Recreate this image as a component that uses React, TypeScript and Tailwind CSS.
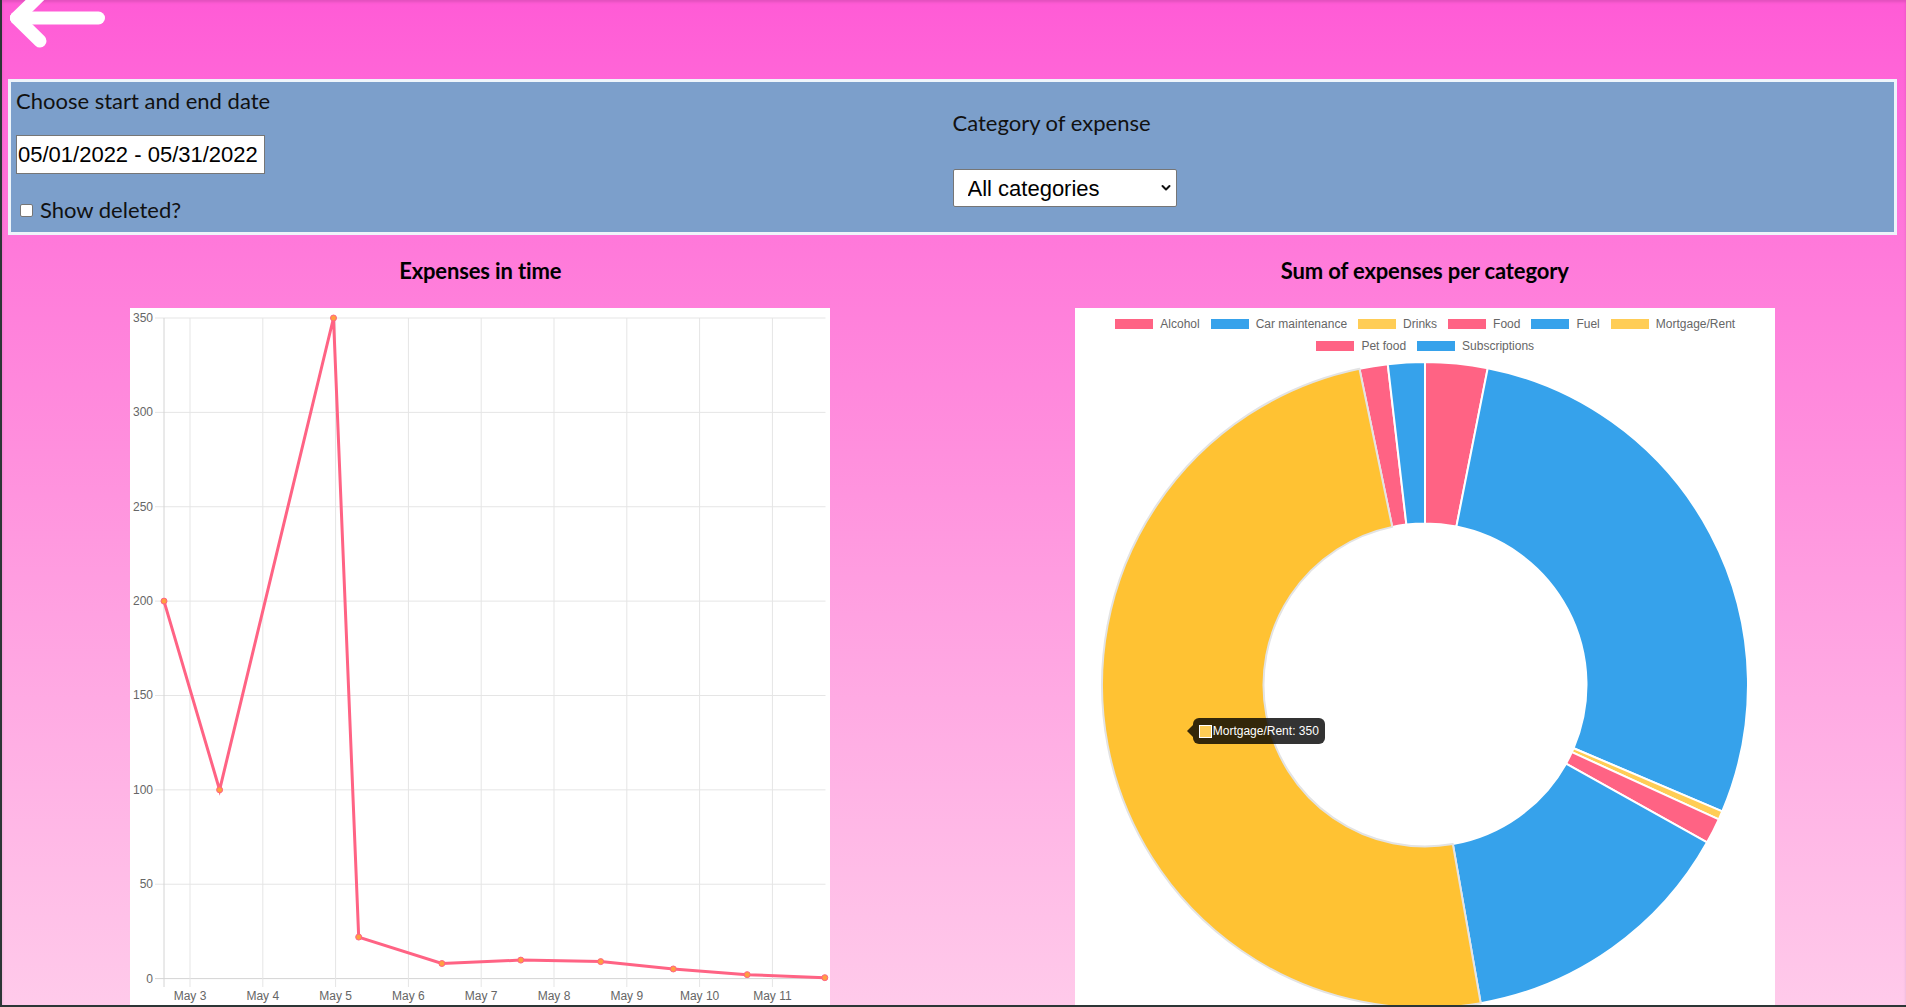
import { useState } from 'react';

const RED = '#ff6384';
const BLUE = '#36a2eb';
const YELLOW = '#ffcd56';

const categories = [
  { name: 'Alcohol', value: 22, color: RED },
  { name: 'Car maintenance', value: 200, color: BLUE },
  { name: 'Drinks', value: 3, color: YELLOW },
  { name: 'Food', value: 9, color: RED },
  { name: 'Fuel', value: 100, color: BLUE },
  { name: 'Mortgage/Rent', value: 350, color: YELLOW },
  { name: 'Pet food', value: 10, color: RED },
  { name: 'Subscriptions', value: 13, color: BLUE },
];

// line chart geometry (local to the 700x700 canvas)
const Y_TOP = 10;
const Y_ZERO = 670.6;
const X_AXIS = 34;
const X_RIGHT = 695.5;
const yOf = (v: number) => Y_ZERO - (v / 350) * (Y_ZERO - Y_TOP);

const yTicks = [350, 300, 250, 200, 150, 100, 50, 0];
const xTicks = ['May 3', 'May 4', 'May 5', 'May 6', 'May 7', 'May 8', 'May 9', 'May 10', 'May 11'].map((label, i) => ({
  label,
  x: 60 + i * 72.8,
}));

const points: [number, number][] = [
  [34, 200],
  [89.6, 100],
  [203.5, 350],
  [228.7, 22],
  [311.9, 8],
  [390.8, 9.8],
  [470.7, 9],
  [543.3, 5.1],
  [617.2, 2.1],
  [694.8, 0.5],
];

const LineChart = () => {
  const line = points.map(([x, v], i) => `${i === 0 ? 'M' : 'L'}${x} ${yOf(v)}`).join(' ');
  return (
    <svg width={700} height={700} viewBox="0 0 700 700" className="block">
      {yTicks.map((t) => (
        <g key={t}>
          <line x1={25} x2={X_RIGHT} y1={yOf(t)} y2={yOf(t)} stroke={t === 0 ? '#d4d4d4' : '#e5e5e5'} strokeWidth={1} />
          <text x={23} y={yOf(t) + 4} textAnchor="end" fontSize={12} fill="#666" fontFamily="Liberation Sans, Arial, sans-serif">
            {t}
          </text>
        </g>
      ))}
      <line x1={X_AXIS} x2={X_AXIS} y1={Y_TOP} y2={679} stroke="#d4d4d4" strokeWidth={1} />
      {xTicks.map((t) => (
        <g key={t.label}>
          <line x1={t.x} x2={t.x} y1={Y_TOP} y2={679} stroke="#e5e5e5" strokeWidth={1} />
          <text x={t.x} y={692} textAnchor="middle" fontSize={12} fill="#666" fontFamily="Liberation Sans, Arial, sans-serif">
            {t.label}
          </text>
        </g>
      ))}
      <path d={line} fill="none" stroke={RED} strokeWidth={3} strokeLinejoin="miter" />
      {points.map(([x, v], i) => (
        <circle key={i} cx={x} cy={yOf(v)} r={3} fill="#ff9f40" stroke={RED} strokeWidth={1} />
      ))}
    </svg>
  );
};

const arc = (cx: number, cy: number, r0: number, r1: number, a0: number, a1: number) => {
  const rad = (a: number) => (a * Math.PI) / 180;
  const p = (r: number, a: number) => `${cx + r * Math.sin(rad(a))} ${cy - r * Math.cos(rad(a))}`;
  const large = a1 - a0 > 180 ? 1 : 0;
  return `M${p(r1, a0)} A${r1} ${r1} 0 ${large} 1 ${p(r1, a1)} L${p(r0, a1)} A${r0} ${r0} 0 ${large} 0 ${p(r0, a0)} Z`;
};

const Doughnut = () => {
  const [hovered] = useState('Mortgage/Rent');
  const total = categories.reduce((s, c) => s + c.value, 0);
  let acc = 0;
  const slices = categories.map((c) => {
    const a0 = (acc / total) * 360;
    acc += c.value;
    const a1 = (acc / total) * 360;
    return { ...c, a0, a1 };
  });
  const ordered = [...slices.filter((s) => s.name !== hovered), ...slices.filter((s) => s.name === hovered)];

  return (
    <div className="relative w-[700px] h-[700px] bg-white flex flex-col">
      <div className="flex flex-wrap justify-center gap-[10px] px-[10px] pt-[10px] pb-[10px] font-['Liberation_Sans',Arial,sans-serif] text-[12px] leading-[12px] text-[#666]">
        {categories.map((c) => (
          <div key={c.name} className="flex items-center gap-[6px] h-[12px]">
            <span className="w-[40px] h-[12px] border border-white" style={{ backgroundColor: c.color }} />
            <span>{c.name}</span>
          </div>
        ))}
      </div>
      <svg width={700} height={646} viewBox="0 0 700 646" className="block">
        {ordered.map((s) => (
          <path
            key={s.name}
            d={arc(350, 323, 161.5, 323, s.a0, s.a1)}
            fill={s.name === hovered ? '#ffc233' : s.color}
            stroke={s.name === hovered ? '#e3e3e3' : '#ffffff'}
            strokeWidth={2}
            strokeLinejoin="round"
          />
        ))}
      </svg>
      <div className="absolute left-[118px] top-[410px] flex items-center gap-[1px] rounded-[6px] bg-black/80 px-[6px] py-[6px] font-['Liberation_Sans',Arial,sans-serif] text-[12px] leading-[14px] text-white">
        <span className="absolute left-[-6px] top-1/2 -translate-y-1/2 w-0 h-0 border-y-[6px] border-y-transparent border-r-[6px] border-r-black/80" />
        <span className="w-[13px] h-[13px] border border-white bg-[#ffcd56]" />
        <span>Mortgage/Rent: 350</span>
      </div>
    </div>
  );
};

const BackArrow = () => (
  <svg width={112} height={52} viewBox="0 0 112 52" className="block" fill="none" stroke="#ffffff" strokeWidth={13} strokeLinecap="round" strokeLinejoin="round">
    <path d="M14.5 18 H96.5" />
    <path d="M14.5 18 L38 41" />
    <path d="M14.5 18 L38 -5" />
  </svg>
);

export default function App() {
  return (
    <div className="h-[1007px] w-full overflow-hidden border-l-2 border-b-2 border-[#2c3636] bg-gradient-to-b from-[#ff5bd6] via-[#ff8fdd] via-45% to-[#ffcaea] shadow-[inset_0_2px_3px_rgba(0,0,0,0.12)] font-['Lato',sans-serif] text-[#111]">
      <header className="h-[79px] flex items-start">
        <BackArrow />
      </header>

      <section className="ml-[6px] mr-[9px] h-[156px] border-[3px] border-[#eef5fb] bg-[#7c9fcb] grid grid-cols-2">
        <div className="flex flex-col items-start pl-[5px] pt-[7px]">
          <label className="text-[22px] leading-[24px]">Choose start and end date</label>
          <input
            type="text"
            readOnly
            value="05/01/2022 - 05/31/2022"
            className="mt-[22px] h-[39px] w-[249px] border border-[#767676] bg-white px-[1px] font-['Liberation_Sans',Arial,sans-serif] text-[22px] text-black outline-none"
          />
          <label className="mt-[24px] flex items-center h-[24px] text-[22px] leading-[24px]">
            <input type="checkbox" className="ml-[4px] mr-[7px] w-[13px] h-[13px] appearance-none rounded-[2px] border border-[#767676] bg-white" />
            Show deleted?
          </label>
        </div>
        <div className="flex flex-col items-start pt-[29px]">
          <label className="text-[22px] leading-[24px]">Category of expense</label>
          <div className="relative mt-[34px]">
            <select className="h-[38px] w-[224px] appearance-none rounded-[2px] border border-[#767676] bg-white pl-[14px] font-['Liberation_Sans',Arial,sans-serif] text-[22px] text-black outline-none">
              <option>All categories</option>
            </select>
            <svg className="pointer-events-none absolute right-[6px] top-[15px]" width={10} height={8} viewBox="0 0 10 8" fill="none" stroke="#111" strokeWidth={2} strokeLinecap="round" strokeLinejoin="round">
              <path d="M1.5 2 L5 5.5 L8.5 2" />
            </svg>
          </div>
        </div>
      </section>

      <main className="ml-[6px] mr-[9px] grid grid-cols-2">
        <div className="flex flex-col items-center pt-[22px]">
          <h2 className="text-[22px] leading-[28px] font-bold tracking-[-0.15px] text-black">Expenses in time</h2>
          <div className="mt-[23px] w-[700px] h-[700px] bg-white">
            <LineChart />
          </div>
        </div>
        <div className="flex flex-col items-center pt-[22px]">
          <h2 className="text-[22px] leading-[28px] font-bold tracking-[-0.15px] text-black">Sum of expenses per category</h2>
          <div className="mt-[23px]">
            <Doughnut />
          </div>
        </div>
      </main>
    </div>
  );
}
